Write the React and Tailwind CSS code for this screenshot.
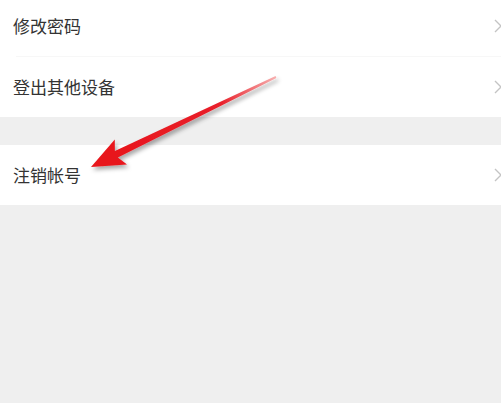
export default function App() {
  const Chevron = () => (
    <svg width="10" height="16" viewBox="0 0 10 16" className="shrink-0">
      <path d="M2 2 L8 8 L2 14" fill="none" stroke="#c4c4c4" strokeWidth="1.4" />
    </svg>
  );
  const font = { fontFamily: '"Noto Sans CJK SC", "Noto Sans", sans-serif' };
  return (
    <div className="relative w-[501px] h-[403px] bg-[#efefef] overflow-hidden" style={font}>
      <div className="bg-white">
        <div className="h-[56px] flex items-center justify-between pl-[13px] pr-0 pb-[4px]">
          <span className="text-[17px] text-[#333]">修改密码</span>
          <div className="mr-[-2px]"><Chevron /></div>
        </div>
        <div className="ml-[16px] h-px bg-[#f7f7f7]" />
        <div className="h-[60px] flex items-center justify-between pl-[13px]">
          <span className="text-[17px] text-[#333]">登出其他设备</span>
          <div className="mr-[-2px]"><Chevron /></div>
        </div>
      </div>
      <div className="h-[28px]" />
      <div className="bg-white h-[60px] flex items-center justify-between pl-[13px]">
        <span className="text-[17px] text-[#333]">注销帐号</span>
        <div className="mr-[-2px]"><Chevron /></div>
      </div>
      <svg className="absolute left-0 top-0 pointer-events-none" width="501" height="403">
        <defs>
          <linearGradient id="ag" x1="276" y1="77" x2="92" y2="166" gradientUnits="userSpaceOnUse">
            <stop offset="0" stopColor="#f7b0b0" />
            <stop offset="0.3" stopColor="#e8202a" />
            <stop offset="1" stopColor="#e8141a" />
          </linearGradient>
          <filter id="sh" x="-20%" y="-20%" width="140%" height="140%">
            <feDropShadow dx="2" dy="3" stdDeviation="2" floodColor="#000" floodOpacity="0.35" />
          </filter>
        </defs>
        <polygon
          points="91,167 114.8,139.4 114.9,151.0 275.6,76.1 276.4,77.9 117.9,157.4 127,164.6"
          fill="url(#ag)"
          filter="url(#sh)"
        />
      </svg>
    </div>
  );
}
